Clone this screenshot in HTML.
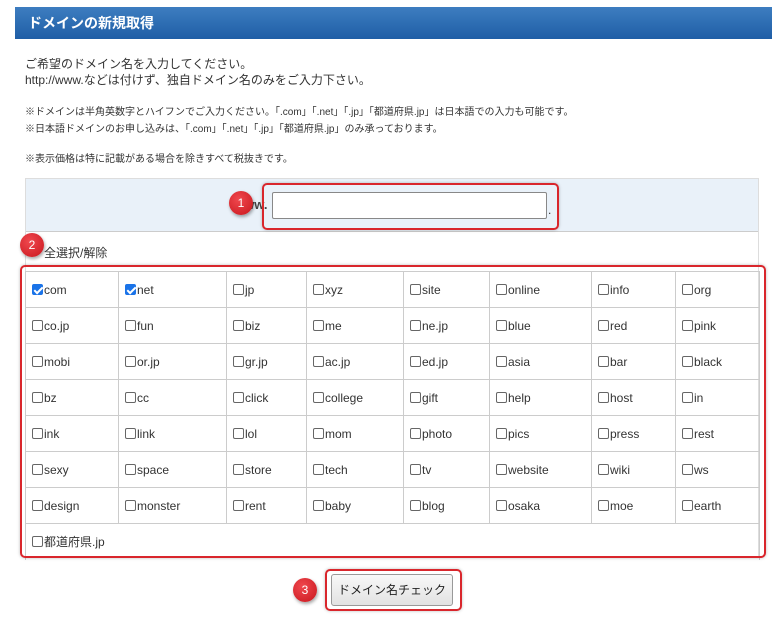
<!DOCTYPE html>
<html><head><meta charset="utf-8"><style>
*{margin:0;padding:0;box-sizing:border-box}
body{width:780px;height:628px;background:#fff;font-family:"Liberation Sans","Noto Sans CJK JP",sans-serif;color:#333;position:relative;overflow:hidden}
.a{position:absolute}
.hd{left:15px;top:7px;width:757px;height:32px;background:linear-gradient(#3d7dc0,#1f5ea6);color:#fff;font-weight:bold;font-size:14px;line-height:32px;padding-left:13px}
.t{font-size:12px;color:#333;left:25px;white-space:nowrap}
.s{font-size:10px;color:#333;left:25px;white-space:nowrap}
.box{left:25px;top:178px;width:734px;height:380px;border:1px solid #ddd}
.inrow{left:26px;top:179px;width:732px;height:53px;background:#e9f1f9;border-bottom:1px solid #ccc}
.red{border:2px solid #d9262c;border-radius:5px;box-shadow:0 0 3px rgba(0,0,0,.25)}
.circ{width:24px;height:24px;border-radius:50%;background:radial-gradient(circle at 40% 35%,#f0484e,#c8161d);color:#fff;font-size:12px;text-align:center;line-height:24px;box-shadow:1px 2px 3px rgba(0,0,0,.35)}
table{border-collapse:collapse;position:absolute;left:25px;top:271px;table-layout:fixed}
td{border:1px solid #ccc;height:36px;font-size:12px;padding-left:6px;white-space:nowrap;color:#333}
.cb{display:inline-block;width:11px;height:11px;border:1px solid #666;border-radius:2px;vertical-align:-1px;margin-right:1px;background:#fff}
.ck{background:#1a73e8;border-color:#1a73e8;position:relative}
.ck:after{content:"";position:absolute;left:3px;top:0px;width:3px;height:7px;border:solid #fff;border-width:0 2px 2px 0;transform:rotate(45deg)}
.btn{left:331px;top:574px;width:122px;height:32px;background:linear-gradient(#f8f8f8,#e2e2e2);border:1px solid #999;border-radius:3px;font-size:12px;text-align:center;line-height:30px;color:#222}
</style></head><body>
<div class="a hd">ドメインの新規取得</div>
<div class="a t" style="top:55px">ご希望のドメイン名を入力してください。</div>
<div class="a t" style="top:71px">http://www.などは付けず、独自ドメイン名のみをご入力下さい。</div>
<div class="a s" style="top:103px">※ドメインは半角英数字とハイフンでご入力ください。「.com」「.net」「.jp」「都道府県.jp」は日本語での入力も可能です。</div>
<div class="a s" style="top:120px">※日本語ドメインのお申し込みは、「.com」「.net」「.jp」「都道府県.jp」のみ承っております。</div>
<div class="a s" style="top:150px">※表示価格は特に記載がある場合を除きすべて税抜きです。</div>
<div class="a box"></div>
<div class="a inrow"></div>
<div class="a" style="left:234px;top:197px;font-size:13px;font-weight:bold;color:#444">www.</div>
<div class="a" style="left:272px;top:192px;width:275px;height:27px;background:#fff;border:1px solid #888;border-radius:2px"></div>
<div class="a" style="left:548px;top:203px;font-size:12px">.</div>
<div class="a red" style="left:262px;top:183px;width:297px;height:47px"></div>
<div class="a circ" style="left:229px;top:191px">1</div>
<div class="a" style="left:44px;top:244px;font-size:12px">全選択/解除</div>
<div class="a circ" style="left:20px;top:233px">2</div>
<table>
<colgroup><col style="width:93px"><col style="width:108px"><col style="width:80px"><col style="width:97px"><col style="width:86px"><col style="width:102px"><col style="width:84px"><col style="width:84px"></colgroup>
<tr><td><span class="cb ck"></span>com</td><td><span class="cb ck"></span>net</td><td><span class="cb"></span>jp</td><td><span class="cb"></span>xyz</td><td><span class="cb"></span>site</td><td><span class="cb"></span>online</td><td><span class="cb"></span>info</td><td><span class="cb"></span>org</td></tr>
<tr><td><span class="cb"></span>co.jp</td><td><span class="cb"></span>fun</td><td><span class="cb"></span>biz</td><td><span class="cb"></span>me</td><td><span class="cb"></span>ne.jp</td><td><span class="cb"></span>blue</td><td><span class="cb"></span>red</td><td><span class="cb"></span>pink</td></tr>
<tr><td><span class="cb"></span>mobi</td><td><span class="cb"></span>or.jp</td><td><span class="cb"></span>gr.jp</td><td><span class="cb"></span>ac.jp</td><td><span class="cb"></span>ed.jp</td><td><span class="cb"></span>asia</td><td><span class="cb"></span>bar</td><td><span class="cb"></span>black</td></tr>
<tr><td><span class="cb"></span>bz</td><td><span class="cb"></span>cc</td><td><span class="cb"></span>click</td><td><span class="cb"></span>college</td><td><span class="cb"></span>gift</td><td><span class="cb"></span>help</td><td><span class="cb"></span>host</td><td><span class="cb"></span>in</td></tr>
<tr><td><span class="cb"></span>ink</td><td><span class="cb"></span>link</td><td><span class="cb"></span>lol</td><td><span class="cb"></span>mom</td><td><span class="cb"></span>photo</td><td><span class="cb"></span>pics</td><td><span class="cb"></span>press</td><td><span class="cb"></span>rest</td></tr>
<tr><td><span class="cb"></span>sexy</td><td><span class="cb"></span>space</td><td><span class="cb"></span>store</td><td><span class="cb"></span>tech</td><td><span class="cb"></span>tv</td><td><span class="cb"></span>website</td><td><span class="cb"></span>wiki</td><td><span class="cb"></span>ws</td></tr>
<tr><td><span class="cb"></span>design</td><td><span class="cb"></span>monster</td><td><span class="cb"></span>rent</td><td><span class="cb"></span>baby</td><td><span class="cb"></span>blog</td><td><span class="cb"></span>osaka</td><td><span class="cb"></span>moe</td><td><span class="cb"></span>earth</td></tr>
<tr><td colspan="8" style="border-bottom:none"><span class="cb"></span>都道府県.jp</td></tr>
</table>
<div class="a red" style="left:20px;top:265px;width:746px;height:293px"></div>
<div class="a btn">ドメイン名チェック</div>
<div class="a red" style="left:325px;top:569px;width:137px;height:42px"></div>
<div class="a circ" style="left:293px;top:578px">3</div>
</body></html>
